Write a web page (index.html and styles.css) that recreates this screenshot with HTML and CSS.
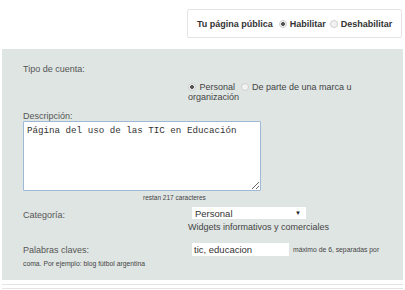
FILE: index.html
```html
<!DOCTYPE html>
<html>
<head>
    <link rel="stylesheet" href="styles.css">
</head>
<body>
    <div class="topbar">
        <div class="public-box">
            <span class="public-label">Tu página pública</span>
            <label class="opt"><input type="radio" name="pub" checked> Habilitar</label>
            <label class="opt"><input type="radio" name="pub"> Deshabilitar</label>
        </div>
    </div>

    <div class="panel">
        <div class="label">Tipo de cuenta:</div>
        <div class="tipo">
            <div class="tipo-line">
                <label class="radio-small"><input type="radio" name="tipo" checked> Personal</label>
                <label class="radio-small"><input type="radio" name="tipo"> De parte de una marca u</label>
            </div>
            <div class="tipo-line">organización</div>
        </div>

        <div class="label desc-label">Descripción:</div>
        <textarea class="desc">Página del uso de las TIC en Educación</textarea>
        <div class="restan">restan 217 caracteres</div>

        <div class="row cat-row">
            <div class="label col">Categoría:</div>
            <div class="field">
                <div class="select">
                    <span>Personal</span>
                    <span class="arrow">▼</span>
                </div>
                <div class="widgets">Widgets informativos y comerciales</div>
            </div>
        </div>

        <div class="row kw-row">
            <div class="label col">Palabras claves:</div>
            <input class="kw-input" type="text" value="tic, educacion">
            <span class="hint">máximo de 6, separadas por</span>
        </div>
        <div class="hint hint-more">coma. Por ejemplo: blog fútbol argentina</div>
    </div>

    <div class="rule"></div>
</body>
</html>
```

FILE: styles.css
```css
body {
    margin: 0;
    background: #fff;
    font-family: "Liberation Sans", Arial, sans-serif;
    color: #444;
}

.topbar {
    display: flex;
    justify-content: flex-end;
    padding: 9px 3px 0 0;
}
.public-box {
    display: flex;
    align-items: center;
    gap: 4px;
    height: 27px;
    width: 197px;
    padding: 0 7px 0 9px;
    border: 1px solid #e4e4e4;
    border-radius: 2px;
    font-size: 9px;
    font-weight: bold;
    color: #333;
}
.public-label {
    margin-right: 2px;
}
.opt {
    display: flex;
    align-items: center;
    gap: 2px;
}

input[type="radio"] {
    appearance: none;
    width: 8px;
    height: 8px;
    margin: 0 1px 0 0;
    border: 1px solid #cfcfcf;
    border-radius: 50%;
    background: #f2f2f2;
    vertical-align: -1px;
}
input[type="radio"]:checked {
    background: radial-gradient(circle, #555 0 1.6px, #f2f2f2 2.2px);
}

.panel {
    margin: 11px 2px 0 2px;
    background: #dfe5e3;
    padding: 15px 21px 0 21px;
    height: 216px;
    font-size: 9px;
}
.label {
    color: #555;
}

.tipo {
    margin: 8px 0 0 165px;
}
.tipo-line {
    height: 10px;
    line-height: 10px;
}
.radio-small {
    margin-right: 3px;
}

.desc-label {
    margin-top: 9px;
}
.desc {
    display: block;
    box-sizing: border-box;
    width: 238px;
    height: 70px;
    margin: 0;
    padding: 3px 3px;
    border: 1px solid #9fb8d6;
    border-radius: 1px;
    font-family: "Liberation Mono", monospace;
    font-size: 9.2px;
    color: #333;
    resize: both;
}
.restan {
    margin: 3px 0 0 120px;
    font-size: 6.5px;
    color: #444;
}

.row {
    display: flex;
}
.col {
    width: 165px;
    flex-shrink: 0;
}
.cat-row {
    margin-top: 6px;
}
.cat-row .label {
    padding-top: 3px;
}
.select {
    display: flex;
    justify-content: space-between;
    align-items: center;
    box-sizing: border-box;
    width: 114px;
    height: 12px;
    margin-left: 4px;
    padding: 0 5px 0 3px;
    background: #fff;
    font-size: 9.5px;
    color: #333;
}
.arrow {
    font-size: 6px;
    color: #222;
}
.widgets {
    margin-top: 3px;
}

.kw-row {
    align-items: center;
    margin-top: 11px;
}
.kw-input {
    box-sizing: border-box;
    width: 97px;
    height: 13px;
    margin: 0 4px 0 4px;
    padding: 0 2px;
    border: none;
    background: #fff;
    font-family: "Liberation Sans", Arial, sans-serif;
    font-size: 9.5px;
    color: #333;
}
.hint {
    font-size: 6.8px;
    color: #444;
}
.hint-more {
    margin-top: 4px;
}

.rule {
    height: 3px;
    margin: 4px 2px 0 2px;
    border-top: 1px solid #e4e4e4;
    border-bottom: 1px solid #e4e4e4;
}
```
